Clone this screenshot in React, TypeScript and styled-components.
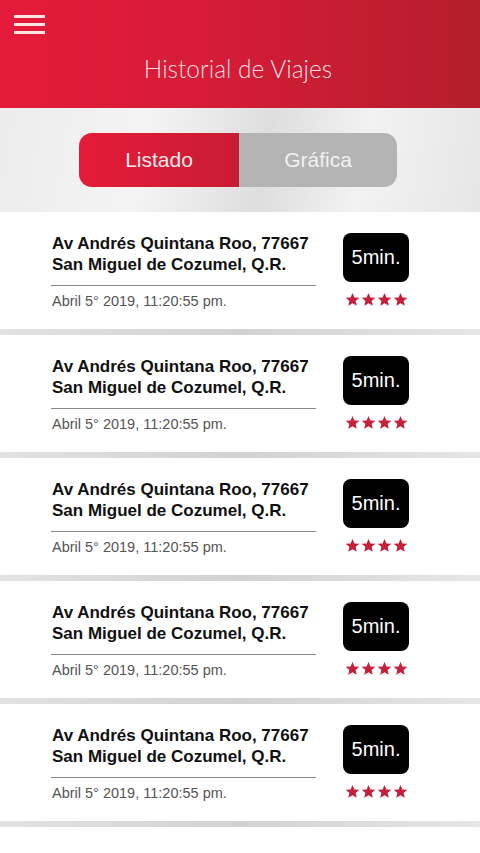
import styled, { createGlobalStyle } from 'styled-components';

const GlobalStyle = createGlobalStyle`
	html, body {
		margin: 0;
		padding: 0;
		background: #fff;
		font-family: 'Liberation Sans', Arial, sans-serif;
	}
`;

const trips = [1, 2, 3, 4, 5].map((id) => ({
	id,
	street: 'Av Andrés Quintana Roo, 77667',
	city: 'San Miguel de Cozumel, Q.R.',
	date: 'Abril 5° 2019, 11:20:55 pm.',
	time: '5min.',
	stars: 4,
}));

function Star() {
	return (
		<svg width="15" height="15" viewBox="0 0 24 24">
			<path fill="#c5203c" d="M12 1.5l3.1 7.2 7.8.6-5.9 5.1 1.8 7.6L12 18l-6.8 4 1.8-7.6L1.1 9.3l7.8-.6z" />
		</svg>
	);
}

function App() {
	return (
		<>
			<GlobalStyle />
			<Page>
				<Header>
					<MenuButton aria-label="menu">
						<span />
						<span />
						<span />
					</MenuButton>
					<Title>Historial de Viajes</Title>
				</Header>
				<TabsArea>
					<Tabs>
						<Tab $active>Listado</Tab>
						<Tab>Gráfica</Tab>
					</Tabs>
				</TabsArea>
				<List>
					{trips.map((trip) => (
						<Card key={trip.id}>
							<Info>
								<Address>
									{trip.street}
									<br />
									{trip.city}
								</Address>
								<DateText>{trip.date}</DateText>
							</Info>
							<Side>
								<Badge>{trip.time}</Badge>
								<Stars>
									{Array.from({ length: trip.stars }).map((_, i) => (
										<Star key={i} />
									))}
								</Stars>
							</Side>
						</Card>
					))}
				</List>
			</Page>
		</>
	);
}

export default App;

const Page = styled.div`
	width: 480px;
	min-height: 853px;
	background: #fff;
`;

const Header = styled.header`
	height: 108px;
	background: linear-gradient(90deg, #e41b39 0%, #d51c36 45%, #b41e2b 100%);
	position: relative;
	display: flex;
	align-items: flex-end;
	justify-content: center;
	padding-bottom: 25px;
	box-sizing: border-box;
`;

const MenuButton = styled.button`
	position: absolute;
	left: 14px;
	top: 15px;
	width: 31px;
	height: 19px;
	padding: 0;
	border: none;
	background: none;
	display: flex;
	flex-direction: column;
	justify-content: space-between;

	span {
		display: block;
		height: 3px;
		background: #fbe3e6;
	}
`;

const Title = styled.h1`
	margin: 0 0 0 -4px;
	font-family: Lato, 'Open Sans', sans-serif;
	font-weight: 300;
	font-size: 24.5px;
	color: #f6dde1;
`;

const TabsArea = styled.div`
	height: 104px;
	background: linear-gradient(100deg, #ececec 0%, #f4f4f4 30%, #dedede 55%, #f2f2f2 75%, #e6e6e6 100%);
	display: flex;
	align-items: center;
	justify-content: center;
`;

const Tabs = styled.div`
	width: 318px;
	height: 54px;
	border-radius: 13px;
	overflow: hidden;
	display: grid;
	grid-template-columns: 160px 1fr;
	margin-right: 4px;
`;

const Tab = styled.div<{ $active?: boolean }>`
	display: flex;
	align-items: center;
	justify-content: center;
	font-size: 21px;
	color: ${({ $active }) => ($active ? '#fbe9ec' : '#f1f1f1')};
	background: ${({ $active }) => ($active ? 'linear-gradient(90deg, #e41b39, #c81d33)' : '#b4b4b4')};
`;

const List = styled.div`
	display: flex;
	flex-direction: column;
	gap: 6px;
	background: linear-gradient(90deg, #e2e2e2, #d2d2d2 50%, #e6e6e6);
	padding-bottom: 6px;
`;

const Card = styled.div`
	height: 117px;
	background: #fff;
	display: flex;
	align-items: flex-start;
	padding: 21px 0 0 51px;
	box-sizing: border-box;
`;

const Info = styled.div`
	width: 265px;
`;

const Address = styled.div`
	font-weight: bold;
	font-size: 17px;
	line-height: 21px;
	color: #111;
	padding: 0 0 10px 1px;
	border-bottom: 1.5px solid #8a8a8a;
`;

const DateText = styled.div`
	margin-top: 7px;
	font-size: 14.5px;
	color: #555;
	padding-left: 1px;
`;

const Side = styled.div`
	margin-left: 27px;
	display: flex;
	flex-direction: column;
	align-items: center;
	gap: 10px;
`;

const Badge = styled.div`
	width: 66px;
	height: 49px;
	border-radius: 8px;
	background: #000;
	color: #fff;
	font-size: 20px;
	display: flex;
	align-items: center;
	justify-content: center;
`;

const Stars = styled.div`
	display: flex;
	gap: 1px;
`;
